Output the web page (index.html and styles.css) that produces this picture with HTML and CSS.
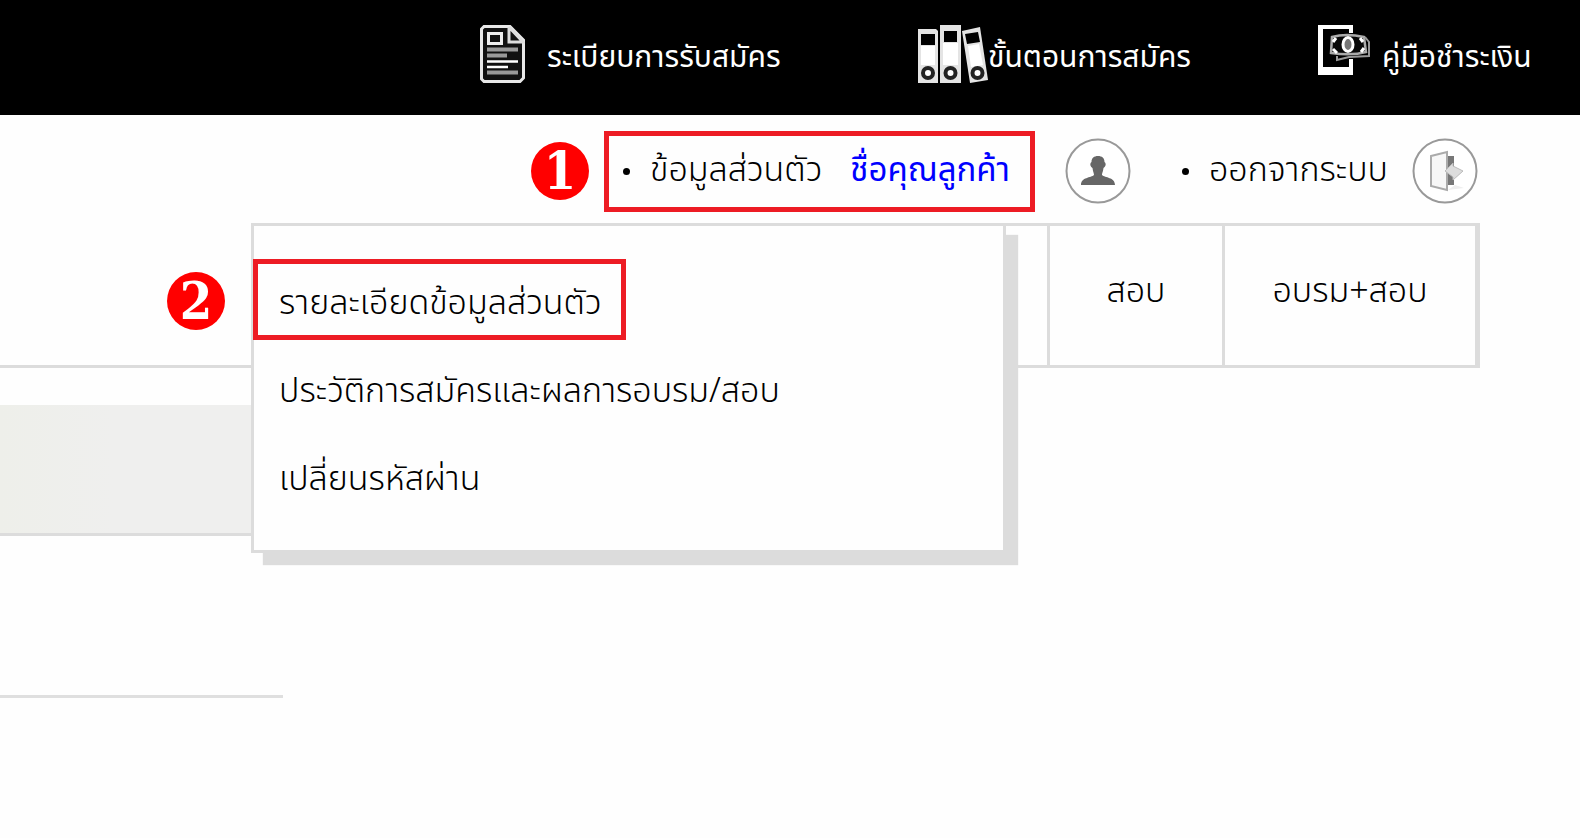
FILE: index.html
```html
<!DOCTYPE html>
<html lang="th">
<head>
    <meta charset="utf-8">
    <title>ข้อมูลส่วนตัว</title>
    <link rel="stylesheet" href="styles.css">
</head>
<body>
    <header class="topbar">
        <a class="top-link rules" href="#">
            <svg width="45" height="58" viewBox="0 0 45 58" fill="none">
                <path d="M4 1.500H30L43.500 15V53L40 56.500H4L1.500 54V4Z" fill="#111" stroke="#e8e8e8" stroke-width="3"/>
                <path d="M29 2V17H43L29 2" stroke="#ddd" stroke-width="3"/>
                <rect x="8.500" y="8.500" width="13" height="10" stroke="#eee" stroke-width="3"/>
                <path d="M7 24.500H38M7 30.500H27M7 47.500H38" stroke="#999" stroke-width="4"/>
                <path d="M7 36.500H38M7 42H28" stroke="#fff" stroke-width="2.500"/>
            </svg>
            <span>ระเบียบการรับสมัคร</span>
        </a>
        <a class="top-link steps" href="#">
            <svg width="70" height="58" viewBox="0 0 70 58">
                <path d="M0 4H18L20 6V58H0Z" fill="#e4e4e4"/>
                <rect x="22" width="21" height="58" fill="#e4e4e4"/>
                <path d="M44 6L62 2L70 55L52 58Z" fill="#e4e4e4"/>
                <path d="M3 9H17V20H3ZM26 6H39V17H26ZM47 9L60 7L62 17L49 19Z"/>
                <path d="M3 21H17V40H3ZM25 18H40V40H25ZM50 21L61 19L65 40L53 42Z" fill="#fff"/>
                <g fill="#fff" stroke="#222" stroke-width="4">
                    <circle cx="10" cy="48" r="5"/>
                    <circle cx="32.500" cy="48" r="5"/>
                    <circle cx="59.500" cy="48" r="5"/>
                </g>
            </svg>
            <span>ขั้นตอนการสมัคร</span>
        </a>
        <a class="top-link payment" href="#">
            <svg width="52" height="50" viewBox="0 0 52 50" fill="none">
                <path d="M0 0H35V8H31V4H5V42H31V34H35V50H0Z" fill="#fff"/>
                <path d="M14 12Q28 8 46 12L48 27Q34 31 13 28Z" fill="#080808" stroke="#aaa" stroke-width="2.500"/>
                <path d="M19 31V35L31 32L51 31V17L47 12" stroke="#999" stroke-width="2"/>
                <ellipse cx="30" cy="19.500" rx="5" ry="7" fill="#777" stroke="#fff" stroke-width="3"/>
                <path d="M15 17L18 13M15 24L19 28M42 13L45 17M43 27L46 23" stroke="#fff" stroke-width="3"/>
            </svg>
            <span>คู่มือชำระเงิน</span>
        </a>
    </header>

    <div class="userbar">
        <span class="badge">1</span>
        <div class="profile">
            <span class="dot"></span>
            <a href="#">ข้อมูลส่วนตัว</a>
            <a class="customer" href="#">ชื่อคุณลูกค้า</a>
        </div>
        <svg class="avatar" width="66" height="66" viewBox="0 0 66 66">
            <circle cx="33" cy="33" r="31.500" fill="#fff" stroke="#999" stroke-width="2"/>
            <path d="M33 18C37 18 39.500 20 39.500 24C42 26 40 29 38.500 30C38 34 37 35 37 37C40 40 50 39 50 47H16C16 39 26 40 29 37C29 35 28 34 27.500 30C26 29 24 26 26.500 24C26.500 20 29 18 33 18Z" fill="#666"/>
        </svg>
        <div class="logout">
            <span class="dot"></span>
            <a href="#">ออกจากระบบ</a>
        </div>
        <svg width="66" height="66" viewBox="0 0 66 66">
            <circle cx="33" cy="33" r="31.500" fill="#fff" stroke="#999" stroke-width="2"/>
            <path d="M35 18H42V47H35Z" fill="#777"/>
            <path d="M36 52L52 50L43 47Z" fill="#eee"/>
            <path d="M19 18L35 14V52L19 48Z" fill="#f7f7f7" stroke="#aaa" stroke-width="2"/>
            <path d="M33 33L41 25V28L51 33L41 42V39Z" fill="#ddd" stroke="#bbb"/>
        </svg>
    </div>

    <nav class="tabs">
        <div class="tab personal">
            <span class="badge">2</span>
            <div class="menu">
                <a class="active" href="#">รายละเอียดข้อมูลส่วนตัว</a>
                <a href="#">ประวัติการสมัครและผลการอบรม/สอบ</a>
                <a href="#">เปลี่ยนรหัสผ่าน</a>
            </div>
        </div>
        <a class="tab exam" href="#">สอบ</a>
        <a class="tab training" href="#">อบรม+สอบ</a>
    </nav>

    <main>
        <div class="banner"></div>
        <hr>
    </main>
</body>
</html>
```
FILE: styles.css
```css
* {
    box-sizing: border-box;
}
body {
    margin: 0;
    background-color: #fefefe;
    color: #000;
    font-family: "Noto Sans Thai", "Noto Sans", "Liberation Sans", sans-serif;
    font-size: 34px;
    font-weight: 300;
    line-height: 44px;
    overflow-x: hidden;
}
a {
    color: inherit;
    text-decoration: none;
    white-space: nowrap;
}
svg {
    display: block;
    flex: none;
}
.topbar {
    display: flex;
    justify-content: flex-end;
    height: 115px;
    padding-top: 25px;
    background-color: #000;
    color: #fff;
    font-size: 30px;
    font-weight: 400;
}
.top-link {
    display: flex;
    align-items: flex-start;
}
.top-link span {
    padding-top: 11px;
}
.rules {
    width: 438px;
    gap: 22px;
}
.steps {
    width: 400px;
}
.payment {
    width: 262px;
    gap: 12px;
}
.userbar {
    display: flex;
    align-items: center;
    justify-content: flex-end;
    height: 108px;
    padding: 4px 102px 0 0;
}
.badge {
    flex: none;
    width: 58px;
    height: 58px;
    border-radius: 50%;
    background-color: #f00;
    color: #fff;
    font: bold 52px/58px "DejaVu Serif Condensed", "DejaVu Serif", serif;
    text-align: center;
}
.profile {
    display: flex;
    align-items: center;
    width: 431px;
    height: 81px;
    margin-left: 15px;
    padding-left: 14px;
    border: 5px solid #ed1c24;
}
.dot {
    width: 7px;
    height: 7px;
    margin-right: 20px;
    border-radius: 50%;
    background-color: #000;
}
.customer {
    margin-left: auto;
    margin-right: 20px;
    color: #00f;
    font-size: 33px;
    font-weight: 400;
}
.avatar {
    margin-left: 30px;
}
.logout {
    display: flex;
    align-items: center;
    width: 281px;
    padding-left: 51px;
}
.tabs {
    display: flex;
    justify-content: flex-end;
    height: 145px;
    margin-right: 100px;
    border-bottom: 3px solid #dcdcdc;
}
.tab {
    border-top: 3px solid #dcdcdc;
    border-right: 3px solid #dcdcdc;
    padding-top: 44px;
    text-align: center;
}
.personal {
    position: relative;
    width: 799px;
}
.personal .badge {
    position: absolute;
    left: -84px;
    top: 46px;
}
.exam {
    width: 175px;
}
.training {
    width: 255px;
    border-right-width: 5px;
}
.menu {
    position: absolute;
    top: -3px;
    left: 0;
    display: flex;
    flex-direction: column;
    align-items: flex-start;
    width: 755px;
    height: 330px;
    padding-top: 33px;
    background-color: #fefefe;
    border: 3px solid #dcdcdc;
    box-shadow: 12px 12px 1px #dcdcdc;
    text-align: left;
}
.menu a {
    padding: 30px 25px 14px;
}
.menu .active {
    width: 373px;
    height: 81px;
    margin-left: -1px;
    padding: 18px 21px 9px;
    border: 5px solid #ed1c24;
}
.banner {
    width: 283px;
    height: 131px;
    margin-top: 37px;
    background: linear-gradient(to right, #eeefea, #efefee 40%);
    border-bottom: 3px solid #dcdcdc;
}
hr {
    width: 283px;
    height: 3px;
    margin: 159px 0 0;
    border: 0;
    background-color: #dfdfdf;
}
```
